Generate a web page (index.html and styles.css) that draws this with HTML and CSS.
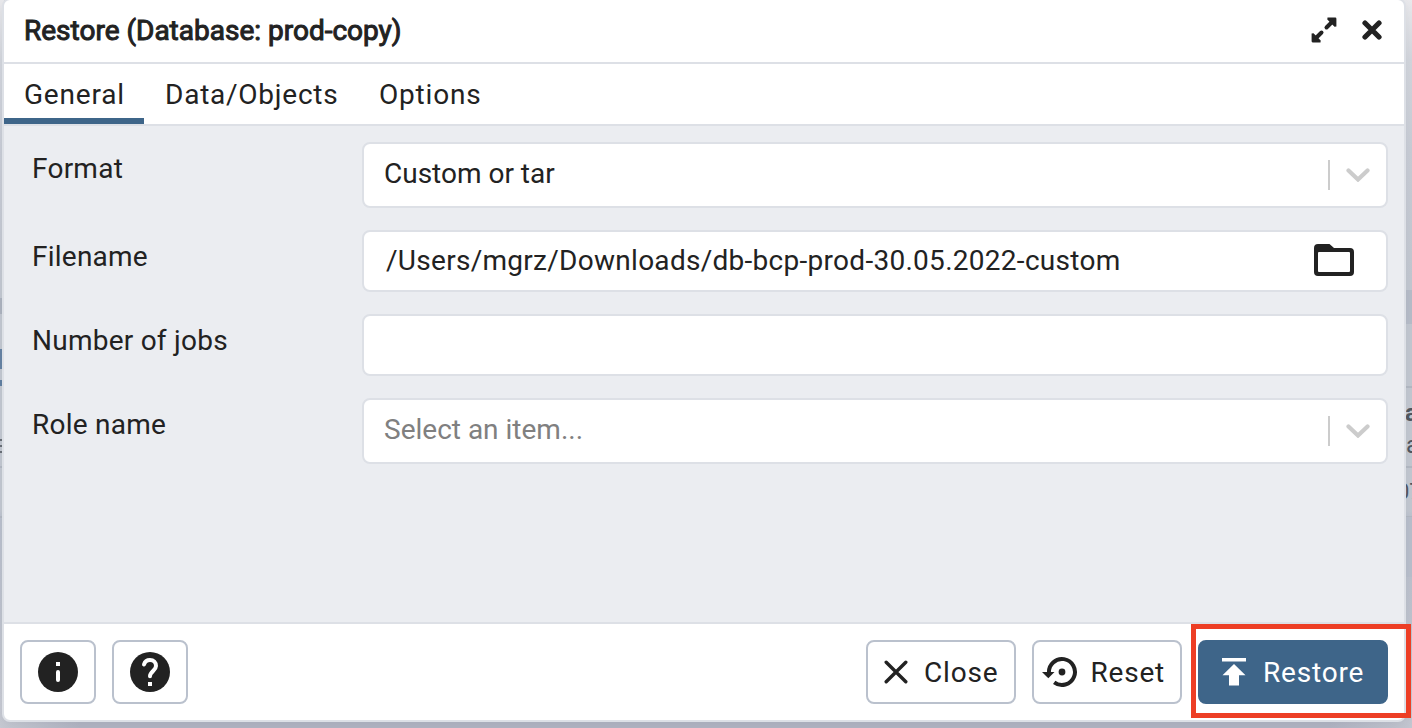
FILE: index.html
```html
<!DOCTYPE html>
<html lang="en">
<head>
<meta charset="utf-8">
<title>Restore</title>
<link rel="stylesheet" href="styles.css">
</head>
<body>
<div class="backdrop" aria-hidden="true">
  <div class="side side-left">
    <i class="mark band-l"></i><i class="mark blue-a"></i><i class="mark blue-b"></i>
    <i class="mark text-a"></i><i class="mark text-b"></i><i class="mark text-c"></i>
    <i class="mark rule-a"></i><i class="mark rule-b"></i>
  </div>
  <div class="side side-right">
    <i class="mark band-r"></i><i class="mark rule-c"></i><i class="mark rule-a"></i><i class="mark rule-b"></i><i class="mark band-low"></i>
    <span class="bg-text bg-bold">a</span><span class="bg-text bg-second">a</span><span class="bg-text bg-third">07</span>
  </div>
</div>
<div class="dialog">
  <header class="header">
    <h1 class="title">Restore (Database: prod-copy)</h1>
    <div class="window-actions">
      <svg class="expand" viewBox="0 0 26 26"><path d="M15.500 10.500L21 5M10.500 15.500L5 21" fill="none" stroke="#222" stroke-width="4" stroke-linecap="round"/><path d="M16.500.6H24.300Q25.400.6 25.400 1.700V9.500L23.500 9.700L16.300 2.500ZM.6 16.500V24.300Q.6 25.400 1.700 25.400H9.500L9.700 23.500L2.500 16.300Z" fill="#222"/></svg>
      <svg class="shut" viewBox="0 0 20 20"><path d="M3 3L17 17M17 3L3 17" fill="none" stroke="#222" stroke-width="5.200" stroke-linecap="round"/></svg>
    </div>
  </header>
  <nav class="tabs">
    <span class="tab active">General</span><span class="tab second">Data/Objects</span><span class="tab">Options</span>
  </nav>
  <main class="form">
    <div class="row">
      <label class="label">Format</label>
      <div class="control select"><span class="value">Custom or tar</span><i class="divider"></i><svg class="chevron" viewBox="0 0 24 14"><path d="M2.500 2.500L12 11.500L21.500 2.500" fill="none" stroke="#ccc" stroke-width="4.200" stroke-linecap="round"/></svg></div>
    </div>
    <div class="row">
      <label class="label">Filename</label>
      <div class="control input"><span class="value path">/Users/mgrz/Downloads/db-bcp-prod-30.05.2022-custom</span><svg class="folder" viewBox="0 0 40 32"><path fill="#222" fill-rule="evenodd" d="M4 0H15.500L20 4H36Q40 4 40 8V28Q40 32 36 32H4Q0 32 0 28V4Q0 0 4 0ZM5 8Q4 8 4 9V27Q4 28 5 28H35Q36 28 36 27V9Q36 8 35 8Z"/></svg></div>
    </div>
    <div class="row">
      <label class="label">Number of jobs</label>
      <div class="control input"></div>
    </div>
    <div class="row">
      <label class="label">Role name</label>
      <div class="control select"><span class="value placeholder">Select an item...</span><i class="divider"></i><svg class="chevron" viewBox="0 0 24 14"><path d="M2.500 2.500L12 11.500L21.500 2.500" fill="none" stroke="#ccc" stroke-width="4.200" stroke-linecap="round"/></svg></div>
    </div>
  </main>
  <footer class="footer">
    <div class="group">
      <button class="btn icon-btn"><svg class="round" viewBox="0 0 40 40"><circle cx="20" cy="20" r="20" fill="#222"/><path d="M18 10H22V14H18ZM18 20Q18 18 20 18T22 20V28Q22 30 20 30T18 28Z" fill="#fff"/></svg></button>
      <button class="btn icon-btn"><svg class="round" viewBox="0 0 40 40"><circle cx="20" cy="20" r="20" fill="#222"/><path d="M14 12.500C14.800 9.700 17.100 8 20 8C23.600 8 26 10.600 26 14C26 18.500 20 19.500 20 24.300" fill="none" stroke="#fff" stroke-width="4" stroke-linecap="round"/><path d="M18 30H22V34H18Z" fill="#fff"/></svg></button>
    </div>
    <div class="group">
      <button class="btn close"><svg class="x-icon" viewBox="0 0 24 24"><path d="M2.200 2.200L21.800 21.800M21.800 2.200L2.200 21.800" stroke="#222" stroke-width="3.400" stroke-linecap="round"/></svg><span class="caption">Close</span></button>
      <button class="btn reset"><svg class="reset-icon" viewBox="0 0 36 32"><path d="M7 17A13 13 0 1 1 12.200 26.400" fill="none" stroke="#222" stroke-width="4"/><path d="M0 16H12.500L6.300 22.300Z" fill="#222"/><circle cx="20" cy="16" r="3.400" fill="#222"/></svg><span class="caption">Reset</span></button>
      <button class="btn restore"><svg class="upload" viewBox="0 0 24 28"><path fill="#fff" d="M0 0H24V3.500H0ZM12 6L23.500 17.300H17V27.500H7V17.300H.5Z"/></svg><span class="caption">Restore</span></button>
    </div>
  </footer>
</div>
<div class="highlight"></div>
</body>
</html>
```
FILE: styles.css
```css
* { box-sizing: border-box; }
body { margin: 0; width: 1412px; height: 728px; overflow: hidden; position: relative; background: #b1b5c2; font: 28px/36px Roboto, sans-serif; color: #222; }
.backdrop { position: absolute; inset: 0; background: linear-gradient(90deg, #c6c9d2 0, #b1b4c2 80px, #b1b4c2 1330px, #c3c6d0 1412px); }
.side { position: absolute; top: 0; height: 700px; background: linear-gradient(#e9e9ec 0, #d2d5dc 60px, #c8ccd5 150px, #c2c7d0 280px, #c2c7d0 510px, #b9bfcc 520px, #bfc3cd 650px, transparent 700px); overflow: hidden; }
.side-left { left: 0; width: 4px; }
.side-right { left: 1400px; width: 12px; }
.mark { position: absolute; left: 0; width: 100%; }
.band-l { top: 298px; height: 16px; background: #acb2be; }
.band-r { top: 290px; height: 34px; background: #b6bcc8; }
.band-low { top: 517px; height: 60px; background: #b8becb; }
.blue-a { top: 349px; height: 20px; background: #6582a3; }
.blue-b { top: 380px; height: 6px; background: #607fa1; }
.text-a, .text-b, .text-c { height: 2px; background: #686e76; }
.text-a { top: 439px; }
.text-b { top: 445px; }
.text-c { top: 451px; }
.rule-a { top: 466px; height: 2px; background: #b2b8c2; }
.rule-b { top: 516px; height: 2px; background: #b2b8c2; }
.rule-c { top: 386px; height: 2px; background: #b2b8c2; }
.bg-text { position: absolute; left: 5px; font-size: 24px; line-height: 28px; color: #50565e; }
.bg-bold { top: 399px; font-weight: 700; }
.bg-second { top: 431px; left: 6px; }
.bg-third { top: 478px; left: -3px; font-size: 22px; }
.dialog { position: relative; display: flex; flex-direction: column; width: 1404px; height: 724px; margin: -2px 0 0 2px; border: 2px solid #dde0e6; border-radius: 8px; background: #fff; box-shadow: 0 4px 10px rgba(80, 84, 100, .08); overflow: hidden; }
.header { display: flex; justify-content: space-between; align-items: center; height: 64px; padding: 0 22px 2px 20px; border-bottom: 2px solid #dde0e6; }
.title { margin: 0; padding-top: 2px; font-size: 28px; line-height: 36px; font-weight: 400; -webkit-text-stroke: 1px #222; }
.window-actions { display: flex; align-items: center; gap: 25px; }
.expand { width: 26px; height: 26px; }
.shut { width: 20px; height: 20px; }
.tabs { display: flex; height: 62px; border-bottom: 2px solid #dde0e6; letter-spacing: .8px; }
.tab { height: 60px; padding: 13px 20px 0; }
.active { width: 140px; border-bottom: 6px solid #3e6589; }
.second { width: 215px; padding-left: 21px; letter-spacing: .76px; }
.form { display: flex; flex-direction: column; gap: 22px; height: 496px; padding: 16px; background: #ebedf1; }
.row { display: grid; grid-template-columns: 330px 1026px; padding-left: 12px; }
.label { padding: 9px 0 0; letter-spacing: .24px; }
.control { display: flex; align-items: center; border: 2px solid #dde0e6; border-radius: 8px; background: #fff; letter-spacing: .28px; }
.select { height: 66px; padding: 0 16px 0 20px; }
.input { height: 62px; padding: 0 32px 2px 22px; }
.value { flex: 1; white-space: nowrap; }
.path { padding-top: 2px; }
.select .value { padding-bottom: 2px; letter-spacing: 0; }
.placeholder { color: #808080; }
.divider { width: 2px; height: 30px; background: #ccc; margin-right: 16px; }
.chevron { width: 24px; height: 14px; }
.folder { width: 40px; height: 32px; }
.footer { display: flex; justify-content: space-between; height: 98px; padding: 16px; border-top: 2px solid #dde0e6; }
.group { display: flex; gap: 16px; }
.btn { display: flex; align-items: center; height: 64px; padding: 0; border: 2px solid #bac1cd; border-radius: 8px; background: #fff; color: #222; font: 28px/36px Roboto, sans-serif; letter-spacing: .8px; }
.caption { padding-top: 2px; }
.icon-btn { width: 76px; justify-content: center; }
.round { width: 40px; height: 40px; }
.close { width: 150px; padding-left: 16px; gap: 16px; }
.x-icon { width: 24px; height: 24px; }
.reset { width: 150px; padding-left: 8px; gap: 12.500px; }
.reset-icon { width: 36px; height: 32px; }
.restore { width: 190px; padding-left: 22px; gap: 17px; color: #fff; border-color: #3e6589; background: #3e6589; }
.upload { width: 24px; height: 28px; }
.highlight { position: absolute; left: 1191px; top: 624px; width: 220px; height: 94px; border: 5px solid #ed3e25; }
```
